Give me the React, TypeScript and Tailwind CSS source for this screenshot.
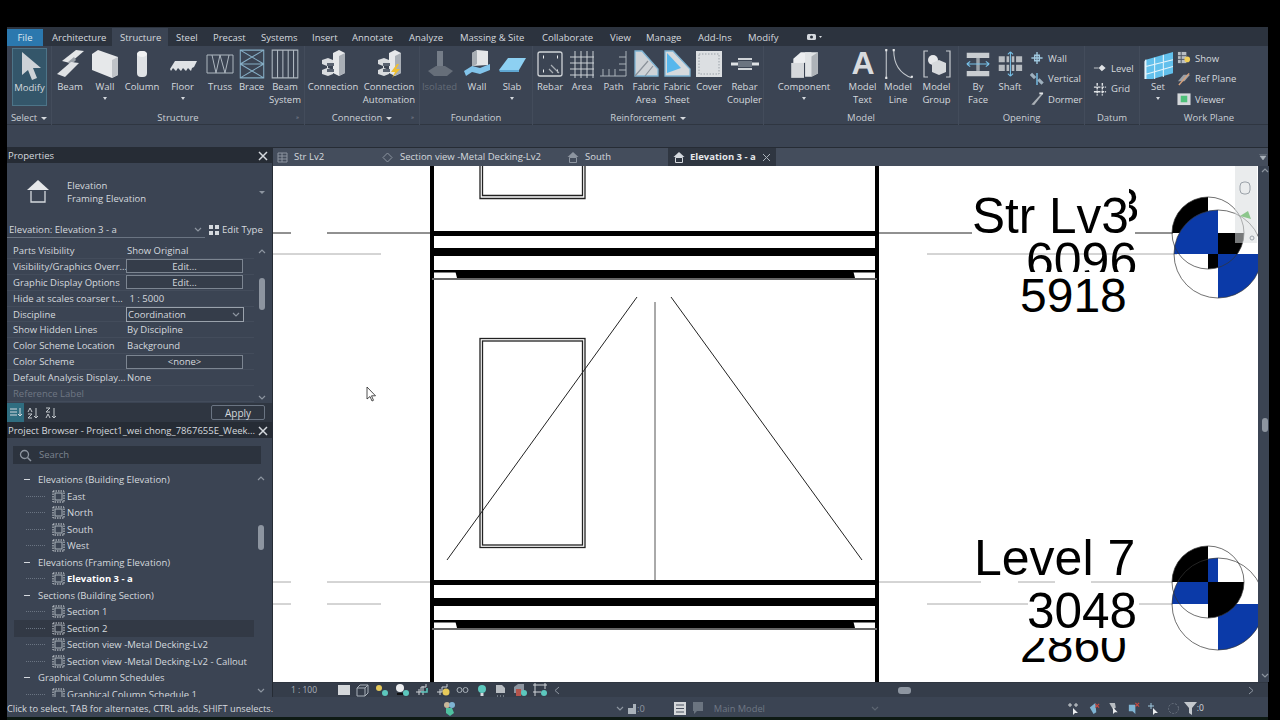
import type { ReactNode } from "react";

const Ic = ({ s = 30, children }: { s?: number; children: ReactNode }) => (
  <svg width={s} height={s} viewBox="0 0 30 30" className="shrink-0">
    {children}
  </svg>
);

const Connection = ({ bolt }: { bolt?: boolean }) => (
  <Ic>
    <path d="M15 4l6-3 6 3v20l-6 3-6-3z" fill="#e6e8ea" />
    <path d="M21 7v20l6-3V4z" fill="#a9afb6" />
    <path d="M4 11l6-2 5 2v4l-5 2v2l5 2v4l-5 2-6-2v-4l5-2v-2l-5-2z" fill="#d9dcdf" />
    <path d="M9 14h7v3H9zM9 20h7v3H9z" fill="#596270" />
    {bolt && <path d="M23 15l-6 8h4l-3 6 8-9h-4l3-5z" fill="#f0c030" />}
  </Ic>
);

const icons: Record<string, ReactNode> = {
  modify: (
    <Ic>
      <path d="M7 2v23l6-5 4 10 5-2-4-10h8z" fill="#cdd2d7" />
    </Ic>
  ),
  beam: (
    <Ic>
      <path d="M7 12L21 1l8 1-14 12z" fill="#e4e6e8" />
      <path d="M13 13l6-5 2 3-6 6z" fill="#9aa1a8" />
      <path d="M2 25l14-12 8 1-14 14z" fill="#dfe2e5" />
    </Ic>
  ),
  wall: (
    <Ic>
      <path d="M2 5l6-4 20 7v18l-6 3-20-8z" fill="#e6e8ea" />
      <path d="M22 11l6-3v18l-6 3z" fill="#bfc3c8" />
    </Ic>
  ),
  column: (
    <Ic>
      <rect x="10" y="2" width="10" height="26" rx="4" fill="#dfe2e5" />
      <ellipse cx="15" cy="5" rx="5" ry="3" fill="#f1f2f3" />
    </Ic>
  ),
  floor: (
    <Ic>
      <path d="M2 20l5-8h22l-3 6-2 1-1 3-3-3-2 3-3-3-2 3-3-3-2 3-3-3-2 3z" fill="#dfe2e5" />
    </Ic>
  ),
  truss: (
    <Ic>
      <path d="M2 6h26v18H2zM7 6l4 18 4-18 5 18 4-18" fill="none" stroke="#aeb7c0" strokeWidth="1" />
    </Ic>
  ),
  brace: (
    <Ic s={32}>
      <path d="M4 2h22v26H4zM4 15h22M4 2l22 13M26 2L4 15M4 15l22 13M26 15L4 28" fill="none" stroke="#86aec6" strokeWidth="1" />
    </Ic>
  ),
  beamSystem: (
    <Ic s={32}>
      <path d="M3 2h24v26H3zM8 2v26M13 2v26M18 2v26M23 2v26" fill="none" stroke="#aeb7c0" strokeWidth="1" />
    </Ic>
  ),
  connection: <Connection />,
  automation: <Connection bolt />,
  isolated: (
    <Ic>
      <path d="M12 2h6v16h-6z" fill="#757d88" />
      <path d="M3 22l8-5h9l8 5-6 5H9z" fill="#666e79" />
    </Ic>
  ),
  wallF: (
    <Ic>
      <path d="M10 4l5-3 11 1v14l-16 1z" fill="#e4e6e8" />
      <path d="M10 4l5-3v14l-5 3z" fill="#a8aeb4" />
      <path d="M2 22l8-5 8 2 10-4v6l-10 4-8-2-6 4z" fill="#82c4ea" />
    </Ic>
  ),
  slab: (
    <Ic>
      <path d="M2 21L11 9h18l-7 12z" fill="#8dd0f2" />
      <path d="M2 21h20v2H3z" fill="#5fa7d2" />
    </Ic>
  ),
  rebar: (
    <Ic>
      <rect x="3" y="3" width="24" height="24" rx="2" fill="none" stroke="#cfd3d7" strokeWidth="1.3" />
      <path d="M8 8h1M22 8h1M8 22h1M22 22h1" stroke="#eceef0" strokeWidth="3" />
      <path d="M16 16l8 8M14 20l4 4" stroke="#a7adb3" strokeWidth="1.2" />
    </Ic>
  ),
  area: (
    <Ic>
      <path d="M3 8h24M3 14h24M3 20h24M3 26h24M8 2v27M14 2v27M20 2v27M26 2v27" stroke="#ccd1d6" strokeWidth="1" />
    </Ic>
  ),
  path: (
    <Ic>
      <path d="M1 27h17M4 20v7M10 20v7M16 20v7M18 27h9V2M20 8h7M20 15h7M20 21h7" fill="none" stroke="#aab2ba" strokeWidth="1" />
    </Ic>
  ),
  fabricArea: (
    <Ic>
      <path d="M4 2h7l16 18v7H4z" fill="#cfd3d7" stroke="#7fb4d3" strokeWidth="1.3" />
      <path d="M4 27L17 12M14 27l8-10" stroke="#8b929a" strokeWidth="1.2" />
    </Ic>
  ),
  fabricSheet: (
    <Ic>
      <path d="M3 2h8l17 18v7H3z" fill="#d6dadd" stroke="#7fb4d3" strokeWidth="1.3" />
      <path d="M5 24V4l14 15z" fill="#57b7ec" />
    </Ic>
  ),
  cover: (
    <Ic>
      <rect x="2" y="2" width="26" height="26" fill="#dcdfe2" />
      <rect x="5" y="5" width="20" height="20" fill="none" stroke="#9aa1a8" strokeDasharray="1.5 1.5" />
    </Ic>
  ),
  coupler: (
    <Ic>
      <path d="M1 15h28" stroke="#dfe2e5" strokeWidth="3" />
      <path d="M8 10h14M8 20h14" stroke="#cfd3d7" strokeWidth="2" />
      <rect x="8" y="12" width="14" height="6" fill="#6b7480" />
    </Ic>
  ),
  component: (
    <Ic s={32}>
      <path d="M5 10l7-6h10v8l-7 2H5z" fill="#eceef0" />
      <path d="M16 4h12v20l-6 3h-6z" fill="#e0e3e5" />
      <path d="M3 14h12v14H3z" fill="#d5d8db" />
      <path d="M22 8l6-4v20l-6 3z" fill="#aeb3b8" />
    </Ic>
  ),
  modelText: (
    <svg width="30" height="30" viewBox="0 0 30 30" className="shrink-0 overflow-hidden">
      <text x="15" y="25" textAnchor="middle" className="font-['Liberation_Sans',sans-serif] text-[32px] font-bold" fill="#d8dbde">
        A
      </text>
    </svg>
  ),
  modelLine: (
    <Ic s={32}>
      <path d="M4 2v26M11 2c0 14 6 22 17 26" fill="none" stroke="#c3c8cd" strokeWidth="1" />
      <path d="M3 2h2M3 28h2M10 2h2M27 27h2" stroke="#e4e6e8" strokeWidth="2" />
    </Ic>
  ),
  modelGroup: (
    <Ic>
      <path d="M6 2H2v26h4M24 2h4v26h-4" fill="none" stroke="#c8ccd1" strokeWidth="1.2" />
      <circle cx="11" cy="11" r="5" fill="#e6e8ea" />
      <path d="M10 14l7-3 7 3v9l-7 3-7-3z" fill="#d6d9dc" />
    </Ic>
  ),
  byFace: (
    <Ic s={26}>
      <path d="M2 2h26v6H2zM2 23h26v6H2z" fill="#c9cdd1" />
      <path d="M13 8h4v15h-4z" fill="#9aa1a8" />
      <path d="M2 15h26M2 15l4-3M2 15l4 3M28 15l-4-3M28 15l-4 3" fill="none" stroke="#78c2ea" strokeWidth="1.2" />
    </Ic>
  ),
  shaft: (
    <Ic s={26}>
      <path d="M2 6h7v7H2zM11 6h3v7h-3zM17 6h3v7h-3zM22 6h7v7h-7zM2 16h7v7H2zM11 16h3v7h-3zM17 16h3v7h-3zM22 16h7v7h-7z" fill="#b6bbc0" />
      <path d="M15.500 1v28M15.500 1l-3 3M15.500 1l3 3M15.500 29l-3-3M15.500 29l3-3" fill="none" stroke="#78c2ea" strokeWidth="1.2" />
    </Ic>
  ),
  set: (
    <Ic s={29}>
      <path d="M2 10L30 2v22L2 32z" fill="#62c0ec" />
      <path d="M2 10v22l-1-1V12zM11 8v22M20 5v23M2 17l28-7M2 25l28-8" fill="none" stroke="#e5f4fb" strokeWidth="1.100" />
    </Ic>
  ),
};

const small: Record<string, ReactNode> = {
  wall: (
    <Ic s={14}>
      <path d="M15 2v26M3 15h24M10 9h10v12H10z" fill="none" stroke="#9fc7de" strokeWidth="3" />
    </Ic>
  ),
  vertical: (
    <Ic s={14}>
      <path d="M2 4l9 9M18 16l9 9" stroke="#9fb0bd" strokeWidth="7" />
      <path d="M15 2v26" stroke="#78c2ea" strokeWidth="3" />
    </Ic>
  ),
  dormer: (
    <Ic s={14}>
      <path d="M3 27L24 4h4L9 28z" fill="#aab0b6" />
      <path d="M20 3h8" stroke="#e2e4e6" strokeWidth="4" />
    </Ic>
  ),
  level: (
    <Ic s={14}>
      <path d="M2 15h10" stroke="#c8ccd1" strokeWidth="2" />
      <path d="M19 8l8 7-8 7-7-7z" fill="#dfe2e5" />
    </Ic>
  ),
  grid: (
    <Ic s={14}>
      <path d="M2 11h26M2 21h26M9 2v27M20 2v27" stroke="#dfe2e5" strokeWidth="3" strokeDasharray="6 2" />
    </Ic>
  ),
  show: (
    <Ic s={14}>
      <path d="M2 2h18v24H2z" fill="#b8bdc2" />
      <path d="M2 10h18M2 18h18M9 2v24" stroke="#4b5361" strokeWidth="2" />
      <circle cx="22" cy="18" r="6" fill="#f0cf5a" />
    </Ic>
  ),
  refPlane: (
    <Ic s={14}>
      <path d="M2 20L14 6h14L16 20z" fill="#9aa1a8" />
      <path d="M4 28L26 3" stroke="#d9a27a" strokeWidth="3" />
    </Ic>
  ),
  viewer: (
    <Ic s={14}>
      <rect x="1" y="3" width="28" height="25" fill="#d5d8db" />
      <rect x="8" y="8" width="14" height="14" fill="#4fc17a" />
    </Ic>
  ),
};

const Caret = () => <div className="mx-auto mt-[4px] h-0 w-0 border-x-[2px] border-t-[3px] border-x-transparent border-t-[#d5d9de]" />;

type Item = { label: string; sub?: string; w: string; icon: string; caret?: boolean; dim?: boolean; on?: boolean };

const RibbonBtn = ({ label, sub, w, icon, caret, dim, on }: Item) => (
  <div className={`flex shrink-0 flex-col items-center text-center leading-[13px] ${w} ${dim ? "text-[#646c78]" : ""} ${on ? "h-[58px] border border-[#4d7488] bg-[#34566a]" : "h-[60px]"}`}>
    <div className="flex h-[32px] items-center justify-center">{icons[icon]}</div>
    <div className="whitespace-nowrap">{label}</div>
    {sub && <div className="whitespace-nowrap">{sub}</div>}
    {caret && <Caret />}
  </div>
);

const SmallBtn = ({ icon, label, className = "" }: { icon: string; label: string; className?: string }) => (
  <div className={`flex h-[20.500px] items-center gap-[4px] whitespace-nowrap ${className}`}>
    {small[icon]}
    <span>{label}</span>
  </div>
);

const Group = ({ w, title, caret, corner, children }: { w: string; title: string; caret?: boolean; corner?: boolean; children: ReactNode }) => (
  <div className={`relative flex shrink-0 flex-col border-r border-[#434c5b] ${w}`}>
    <div className="flex h-[65px] pt-[2px]">{children}</div>
    <div className="flex h-[14px] items-center justify-center gap-[4px] text-[#c9ced3]">
      {title}
      {caret && <span className="h-0 w-0 border-x-[3px] border-t-[3px] border-x-transparent border-t-[#d5d9de]" />}
    </div>
    {corner && <span className="absolute bottom-[5px] right-[5px] text-[6px] leading-none text-[#8d95a0]">»</span>}
  </div>
);

const tabs = [
  { t: "Architecture", w: "w-[68px]" },
  { t: "Structure", w: "w-[56px]", on: true },
  { t: "Steel", w: "w-[37px]" },
  { t: "Precast", w: "w-[48px]" },
  { t: "Systems", w: "w-[51px]" },
  { t: "Insert", w: "w-[40px]" },
  { t: "Annotate", w: "w-[57px]" },
  { t: "Analyze", w: "w-[51px]" },
  { t: "Massing & Site", w: "w-[82px]" },
  { t: "Collaborate", w: "w-[68px]" },
  { t: "View", w: "w-[36px]" },
  { t: "Manage", w: "w-[52px]" },
  { t: "Add-Ins", w: "w-[50px]" },
  { t: "Modify", w: "w-[60px]" },
];

const structure: Item[] = [
  { label: "Beam", w: "w-[36px]", icon: "beam" },
  { label: "Wall", w: "w-[34px]", icon: "wall", caret: true },
  { label: "Column", w: "w-[40px]", icon: "column" },
  { label: "Floor", w: "w-[41px]", icon: "floor", caret: true },
  { label: "Truss", w: "w-[34px]", icon: "truss" },
  { label: "Brace", w: "w-[29px]", icon: "brace" },
  { label: "Beam", sub: "System", w: "w-[38px]", icon: "beamSystem" },
];
const connection: Item[] = [
  { label: "Connection", w: "w-[56px]", icon: "connection" },
  { label: "Connection", sub: "Automation", w: "w-[56px]", icon: "automation" },
];
const foundation: Item[] = [
  { label: "Isolated", w: "w-[39px]", icon: "isolated", dim: true },
  { label: "Wall", w: "w-[36px]", icon: "wallF" },
  { label: "Slab", w: "w-[34px]", icon: "slab", caret: true },
];
const reinforcement: Item[] = [
  { label: "Rebar", w: "w-[34px]", icon: "rebar" },
  { label: "Area", w: "w-[30px]", icon: "area" },
  { label: "Path", w: "w-[33px]", icon: "path" },
  { label: "Fabric", sub: "Area", w: "w-[32px]", icon: "fabricArea" },
  { label: "Fabric", sub: "Sheet", w: "w-[30px]", icon: "fabricSheet" },
  { label: "Cover", w: "w-[34px]", icon: "cover" },
  { label: "Rebar", sub: "Coupler", w: "w-[37px]", icon: "coupler" },
];
const model: Item[] = [
  { label: "Component", w: "w-[80px]", icon: "component", caret: true },
  { label: "Model", sub: "Text", w: "w-[37px]", icon: "modelText" },
  { label: "Model", sub: "Line", w: "w-[34px]", icon: "modelLine" },
  { label: "Model", sub: "Group", w: "w-[43px]", icon: "modelGroup" },
];

const props: { k: string; v?: string; box?: boolean; select?: boolean; dim?: boolean }[] = [
  { k: "Parts Visibility", v: "Show Original" },
  { k: "Visibility/Graphics Overr...", v: "Edit...", box: true },
  { k: "Graphic Display Options", v: "Edit...", box: true },
  { k: "Hide at scales coarser t...", v: " 1 : 5000" },
  { k: "Discipline", v: "Coordination", select: true },
  { k: "Show Hidden Lines", v: "By Discipline" },
  { k: "Color Scheme Location", v: "Background" },
  { k: "Color Scheme", v: "<none>", box: true },
  { k: "Default Analysis Display...", v: "None" },
  { k: "Reference Label", dim: true },
];

const tree: { t: string; head?: boolean; bold?: boolean; hl?: boolean }[] = [
  { t: "Elevations (Building Elevation)", head: true },
  { t: "East" },
  { t: "North" },
  { t: "South" },
  { t: "West" },
  { t: "Elevations (Framing Elevation)", head: true },
  { t: "Elevation 3 - a", bold: true },
  { t: "Sections (Building Section)", head: true },
  { t: "Section 1" },
  { t: "Section 2", hl: true },
  { t: "Section view -Metal Decking-Lv2" },
  { t: "Section view -Metal Decking-Lv2 - Callout" },
  { t: "Graphical Column Schedules", head: true },
  { t: "Graphical Column Schedule 1" },
];

const Close = () => (
  <svg width="10" height="10" viewBox="0 0 10 10" className="shrink-0">
    <path d="M1 1l8 8M9 1L1 9" stroke="#d5d9de" strokeWidth="1.500" />
  </svg>
);

const Chevron = ({ up, color = "#8d95a0" }: { up?: boolean; color?: string }) => (
  <svg width="8" height="5" viewBox="0 0 8 5" className="shrink-0">
    <path d={up ? "M1 4l3-3 3 3" : "M1 1l3 3 3-3"} fill="none" stroke={color} strokeWidth="1.200" />
  </svg>
);

const HouseIcon = ({ color = "#d5d9de" }: { color?: string }) => (
  <svg width="12" height="12" viewBox="0 0 12 12" className="shrink-0">
    <path d="M6 1L.5 6h11z" fill={color} />
    <path d="M2.500 6.500h7v5h-7z" fill="none" stroke={color} />
  </svg>
);

const ViewIcon = () => (
  <svg width="13" height="13" viewBox="0 0 13 13" className="shrink-0">
    <rect x="3" y="3" width="7" height="7" fill="none" stroke="#aab2ba" />
    <rect x="1" y="1" width="11" height="11" fill="none" stroke="#d5d9de" strokeWidth="1" strokeDasharray="1.500 1" />
  </svg>
);

const Bulb = ({ c = "#5cc7bd" }: { c?: string }) => (
  <svg width="14" height="14" viewBox="0 0 14 14" className="shrink-0">
    <circle cx="7" cy="6" r="4" fill={c} />
    <rect x="5.500" y="10" width="3" height="3" fill="#d5d9de" />
  </svg>
);

const viewBarIcons = [
  <span key="a" className="h-[10px] w-[12px] bg-[#d5d8db]" />,
  <svg key="b" width="13" height="13" viewBox="0 0 13 13"><path d="M1 4l3-3h8v8l-3 3H1zM1 4h8v8M9 4l3-3" fill="none" stroke="#aab2ba" /></svg>,
  <svg key="c" width="15" height="14" viewBox="0 0 15 14"><circle cx="5" cy="5" r="3" fill="#e6c95a" /><circle cx="11" cy="10" r="3" fill="#5cc7bd" /></svg>,
  <svg key="d" width="15" height="14" viewBox="0 0 15 14"><circle cx="5" cy="5" r="4" fill="#eceef0" /><path d="M2 11h6" stroke="#111" strokeWidth="2" /><circle cx="11" cy="10" r="3" fill="#5cc7bd" /></svg>,
  <svg key="e" width="15" height="14" viewBox="0 0 15 14"><path d="M1 9h5V4h5V1M4 12V6M8 12V3" fill="none" stroke="#cfd3d7" /><path d="M6 9h6V5" fill="none" stroke="#5cc7bd" strokeWidth="1.500" /></svg>,
  <svg key="f" width="15" height="14" viewBox="0 0 15 14"><path d="M1 9h5V4h5V1M4 12V6" fill="none" stroke="#cfd3d7" /><circle cx="10" cy="9" r="3.500" fill="#e6c95a" /></svg>,
  <svg key="g" width="13" height="10" viewBox="0 0 13 10"><circle cx="3.500" cy="5" r="2.500" fill="none" stroke="#aab2ba" /><circle cx="9.500" cy="5" r="2.500" fill="none" stroke="#aab2ba" /></svg>,
  <Bulb key="h" />,
  <svg key="i" width="13" height="13" viewBox="0 0 13 13"><path d="M2 1h6l3 3v5H2z" fill="#b8bdc2" /><path d="M3 12h1M6 12h1M9 12h1" stroke="#aab2ba" /></svg>,
  <svg key="j" width="15" height="14" viewBox="0 0 15 14"><path d="M1 4l4-3h6v9H1z" fill="#8d95a0" /><rect x="3" y="6" width="5" height="7" fill="#b4544c" /><circle cx="11" cy="10" r="3" fill="#5cc7bd" /></svg>,
  <svg key="k" width="15" height="14" viewBox="0 0 15 14"><path d="M2 0v13M12 0v6M0 2h14M0 9h8" fill="none" stroke="#cfd3d7" /><circle cx="11" cy="10" r="3" fill="#5cc7bd" /></svg>,
];

const selectIcons = [
  <svg key="a" width="13" height="13" viewBox="0 0 13 13"><path d="M1 3h4M7 3h4M3 1v4M9 1v4" stroke="#cfd3d7" /><path d="M6 6v7l2-2h3z" fill="#eceef0" /></svg>,
  <svg key="b" width="13" height="13" viewBox="0 0 14 14"><path d="M9 1L3 6l4 7 3-2z" fill="#7fb4d3" /><path d="M9 2l4 4M13 2L9 6" stroke="#c9493f" strokeWidth="1.300" /></svg>,
  <svg key="c" width="13" height="13" viewBox="0 0 13 14"><path d="M2 1h6l1 5-3 2z" fill="#b8bdc2" /><path d="M6 6v7l2-2h3z" fill="#eceef0" /></svg>,
  <svg key="d" width="13" height="13" viewBox="0 0 14 14"><path d="M2 3h7v10l-3-3H2z" fill="#7fb4d3" /><path d="M9 1l4 4M13 1L9 5" stroke="#c9493f" strokeWidth="1.300" /></svg>,
  <svg key="e" width="13" height="13" viewBox="0 0 13 13"><path d="M4 1v6M1 4h6" stroke="#9fc7de" /><path d="M6 6v7l2-2h3z" fill="#eceef0" /></svg>,
  <svg key="f" width="13" height="13" viewBox="0 0 13 13"><circle cx="6.500" cy="6.500" r="5" fill="none" stroke="#6b7480" strokeDasharray="2 1.500" /></svg>,
];

const Drawing = () => (
  <svg viewBox="273 166 985 516" className="block h-[516px] w-[985px] shrink-0 bg-white">
    <defs>
      <clipPath id="clipTop"><rect x="1000" y="240" width="160" height="32" /></clipPath>
      <clipPath id="clipLow"><rect x="1000" y="638" width="160" height="30" /></clipPath>
      <clipPath id="clipStray"><rect x="1129" y="186" width="8" height="38" /></clipPath>
    </defs>

    {/* level lines */}
    <path d="M273 233h18M327 233h105M877 233h95M1135 233h38" stroke="#222" strokeWidth="1" />
    <path d="M273 254h108M927 254h250" stroke="#aaa" strokeWidth="1" />
    <path d="M273 582h18M327 582h105M877 582h104M1018 582h37M1091 582h82" stroke="#aaa" strokeWidth="1" />
    <path d="M273 604h18M327 604h54M927 604h101M1139 604h34" stroke="#aaa" strokeWidth="1" />

    {/* upper window */}
    <path d="M480 166v32.500h105V166M482.500 166v29.500h100V166" fill="none" stroke="#222" strokeWidth="1.300" />
    {/* walls */}
    <path d="M432 166v516M877 166v516" stroke="#000" strokeWidth="4" />

    {/* upper beam band */}
    <rect x="432" y="231" width="445" height="5" />
    <rect x="432" y="248" width="445" height="8" />
    <rect x="432" y="270" width="445" height="2.500" />
    <path d="M455 270h398l2 8H457z" />
    <path d="M432 279h445" stroke="#666" strokeWidth="2" />
    {/* lower beam band */}
    <rect x="432" y="580" width="445" height="5" />
    <rect x="432" y="598" width="445" height="8" />
    <rect x="432" y="620" width="445" height="2.500" />
    <path d="M455 620h398l2 8H457z" />
    <path d="M432 629h445" stroke="#666" strokeWidth="2" />

    {/* window and door swing */}
    <rect x="480" y="338.500" width="105" height="209" fill="none" stroke="#222" strokeWidth="1.300" />
    <rect x="482.500" y="341" width="100" height="204" fill="none" stroke="#222" strokeWidth="1.300" />
    <path d="M447 560L637 297M671 297l191 263" stroke="#222" strokeWidth="1" fill="none" />
    <path d="M655 302v278" stroke="#555" strokeWidth="1" />

    {/* level text */}
    <g className="font-['Liberation_Sans',sans-serif]" fill="#000">
      <text x="1112" y="222" fontSize="49" clipPath="url(#clipStray)">3</text>
      <text x="972" y="233" fontSize="49.500">Str Lv3</text>
      <text x="1026" y="278" fontSize="50" clipPath="url(#clipTop)">6096</text>
      <text x="1020" y="312" fontSize="48">5918</text>
      <text x="974" y="575" fontSize="50">Level 7</text>
      <text x="1027" y="628" fontSize="49.500">3048</text>
      <text x="1020" y="662" fontSize="48" clipPath="url(#clipLow)">2860</text>
    </g>

    {/* Str Lv3 marker */}
    <path d="M1208 233v-36a36 36 0 0 0-36 36zM1208 233h36a36 36 0 0 1-36 36z" fill="#000" />
    <path d="M1218 254v-44a44 44 0 0 0-44 44zM1218 254h44a44 44 0 0 1-44 44z" fill="#0b3aa8" />
    <circle cx="1208" cy="233" r="36" fill="none" stroke="#333" strokeWidth="0.700" />
    <circle cx="1218" cy="254" r="44" fill="none" stroke="#333" strokeWidth="0.700" />

    {/* Level 7 marker */}
    <path d="M1218 604v-46a46 46 0 0 0-46 46zM1218 604h46a46 46 0 0 1-46 46z" fill="#0b3aa8" />
    <path d="M1208 582v-36a36 36 0 0 0-36 36zM1208 582h36a36 36 0 0 1-36 36z" fill="#000" />
    <circle cx="1208" cy="582" r="36" fill="none" stroke="#333" strokeWidth="0.700" />
    <circle cx="1218" cy="604" r="46" fill="none" stroke="#333" strokeWidth="0.700" />

    {/* navigation bar */}
    <rect x="1235" y="166" width="22" height="77" fill="#d9dcdf" fillOpacity="0.55" />
    <rect x="1240" y="182" width="10" height="12" rx="4" fill="none" stroke="#9aa1a8" />
    <path d="M1240 216l8-5 3 8z" fill="#8cc68c" />
    <circle cx="1252" cy="238" r="2" fill="none" stroke="#9aa1a8" />

    {/* mouse pointer */}
    <path d="M367 387v12l3-2.500 2 4.500 1.500-.7-2-4.500h4z" fill="#fff" stroke="#222" strokeWidth="0.800" />
  </svg>
);

export default function App() {
  return (
    <div className="flex h-[720px] w-[1280px] flex-col overflow-hidden bg-black pl-[7px] pr-[12px] pt-[27px] font-['Open_Sans',sans-serif] text-[9.500px] leading-none text-[#d5d9de]">
      {/* ribbon tabs */}
      <div className="flex h-[19px] shrink-0 items-end bg-[#2c333e]">
        <div className="flex h-[17px] w-[36px] items-center justify-center bg-[#2b78ae] text-[#dbe7f0]">File</div>
        <div className="w-px" />
        {tabs.map((t) => (
          <div key={t.t} className={`flex h-[18px] items-center pl-[8px] pt-[1px] ${t.w} ${t.on ? "bg-[#3b4453]" : ""}`}>
            {t.t}
          </div>
        ))}
        <svg width="16" height="8" viewBox="0 0 16 8" className="mb-[5px] ml-[7px]">
          <rect x="0" y="1" width="9" height="6" rx="1.500" fill="#d5d9de" />
          <circle cx="4.500" cy="4" r="1.500" fill="#2c333e" />
          <path d="M12 3h3l-1.500 2z" fill="#d5d9de" />
        </svg>
      </div>

      {/* ribbon */}
      <div className="flex h-[79px] shrink-0 items-start border-b border-[#2f3641] bg-[#3b4453]">
        <Group w="w-[45px]" title="Select" caret>
          <div className="pl-[5px]">
            <RibbonBtn label="Modify" w="w-[35px]" icon="modify" on />
          </div>
        </Group>
        <Group w="w-[253px]" title="Structure" corner>
          {structure.map((i) => <RibbonBtn key={i.label + i.icon} {...i} />)}
        </Group>
        <Group w="w-[115px]" title="Connection" caret corner>
          {connection.map((i) => <RibbonBtn key={i.icon} {...i} />)}
        </Group>
        <Group w="w-[113px]" title="Foundation">
          {foundation.map((i) => <RibbonBtn key={i.icon} {...i} />)}
        </Group>
        <Group w="w-[231px]" title="Reinforcement" caret>
          {reinforcement.map((i) => <RibbonBtn key={i.icon} {...i} />)}
        </Group>
        <Group w="w-[195px]" title="Model">
          {model.map((i) => <RibbonBtn key={i.icon} {...i} />)}
        </Group>
        <Group w="w-[126px]" title="Opening">
          <RibbonBtn label="By" sub="Face" w="w-[38px]" icon="byFace" />
          <RibbonBtn label="Shaft" w="w-[26px]" icon="shaft" />
          <div className="ml-[7px] flex flex-col">
            <SmallBtn icon="wall" label="Wall" />
            <SmallBtn icon="vertical" label="Vertical" />
            <SmallBtn icon="dormer" label="Dormer" />
          </div>
        </Group>
        <Group w="w-[55px]" title="Datum">
          <div className="ml-[8px] mt-[10px] flex flex-col">
            <SmallBtn icon="level" label="Level" />
            <SmallBtn icon="grid" label="Grid" />
          </div>
        </Group>
        <div className="flex flex-col">
          <div className="flex h-[65px] pt-[2px]">
            <RibbonBtn label="Set" w="w-[36px]" icon="set" caret />
            <div className="ml-[1px] flex flex-col">
              <SmallBtn icon="show" label="Show" />
              <SmallBtn icon="refPlane" label="Ref  Plane" />
              <SmallBtn icon="viewer" label="Viewer" />
            </div>
          </div>
          <div className="flex h-[14px] w-[128px] items-center justify-center pl-[10px] text-[#c9ced3]">Work Plane</div>
        </div>
      </div>

      {/* options bar */}
      <div className="h-[22px] shrink-0 bg-[#3b4453]" />

      <div className="flex h-[550px] shrink-0 gap-px bg-[#262c35] pt-px">
        {/* left panels */}
        <div className="flex w-[265px] shrink-0 flex-col gap-px">
          <div className="flex h-[274px] shrink-0 flex-col bg-[#3b4453]">
            <div className="flex h-[15px] shrink-0 items-center justify-between bg-[#262c35] pl-px pr-[4px]">
              <span>Properties</span>
              <Close />
            </div>
            <div className="flex h-[59px] shrink-0 items-center pr-[7px]">
              <div className="flex w-[60px] justify-center pb-[4px] pl-[2px]">
                <svg width="24" height="24" viewBox="0 0 24 24">
                  <path d="M12 1L1 11h22z" fill="#e6e8ea" />
                  <path d="M5 12v11h14V12" fill="none" stroke="#d5d9de" strokeWidth="1.300" />
                </svg>
              </div>
              <div className="flex flex-1 flex-col gap-[2px] pb-[1px] leading-[11px]">
                <span>Elevation</span>
                <span>Framing Elevation</span>
              </div>
              <span className="h-0 w-0 border-x-[3px] border-t-[3px] border-x-transparent border-t-[#8d95a0]" />
            </div>
            <div className="flex h-[16px] shrink-0 items-center">
              <div className="flex h-[16px] w-[198px] items-center justify-between border-b border-[#6a7482] pl-[2px] pr-[3px] text-[9.600px]">
                <span>Elevation: Elevation 3 - a</span>
                <Chevron />
              </div>
              <svg width="10" height="10" viewBox="0 0 10 10" className="ml-[4px]">
                <path d="M0 0h4v4H0zM6 0h4v4H6zM0 6h4v4H0zM6 6h4v4H6z" fill="#d5d9de" />
              </svg>
              <span className="ml-[3px] text-[9.600px]">Edit Type</span>
            </div>
            <div className="flex min-h-0 flex-1 pt-[5px]">
              <div className="flex w-[247px] shrink-0 flex-col">
                {props.map((p) => (
                  <div key={p.k} className="flex h-[15.900px] shrink-0 items-center border-b border-[#434c5b] leading-[13px]">
                    <div className={`w-[119px] shrink-0 whitespace-nowrap pl-[6px] ${p.dim ? "text-[#6f7783]" : ""}`}>{p.k}</div>
                    {p.box && (
                      <div className="flex h-[14px] w-[117px] items-center justify-center border border-[#7c8591] bg-[#353d4a]">{p.v}</div>
                    )}
                    {p.select && (
                      <div className="flex h-[15px] w-[118px] items-center justify-between border border-[#9aa2ac] bg-[#353d4a] pl-[1px] pr-[3px]">
                        {p.v}
                        <Chevron />
                      </div>
                    )}
                    {!p.box && !p.select && <div className="whitespace-pre pl-px">{p.v}</div>}
                  </div>
                ))}
              </div>
              <div className="flex flex-1 flex-col items-center pr-[3px] pt-[6px]">
                <Chevron up />
                <div className="mt-[24px] h-[32px] w-[6px] rounded-[3px] bg-[#8d95a0]" />
                <div className="flex-1" />
                <div className="pb-[3px]">
                  <Chevron />
                </div>
              </div>
            </div>
            <div className="flex h-[19px] shrink-0 items-center bg-[#2f3641] pr-[7px]">
              <div className="flex h-[19px] w-[17px] items-center justify-center bg-[#2f6d80]">
                <svg width="12" height="11" viewBox="0 0 12 11">
                  <path d="M0 2h7M0 5h7M0 8h7M10 1v8M8 7l2 2 2-2" fill="none" stroke="#d5d9de" />
                </svg>
              </div>
              <svg width="12" height="12" viewBox="0 0 12 12" className="ml-[3px]">
                <path d="M1 5l2-4 2 4M1 7h4L1 11h4M9 1v10M7 9l2 2 2-2" fill="none" stroke="#c3c8cd" />
              </svg>
              <svg width="12" height="12" viewBox="0 0 12 12" className="ml-[6px]">
                <path d="M1 1h4L1 5h4M1 11l2-4 2 4M9 1v10M7 9l2 2 2-2" fill="none" stroke="#c3c8cd" />
              </svg>
              <div className="ml-auto flex h-[15px] w-[54px] items-center justify-center rounded-[2px] border border-[#6a7482] text-[10px]">Apply</div>
            </div>
          </div>

          <div className="flex min-h-0 flex-1 flex-col bg-[#3b4453]">
            <div className="flex h-[15px] shrink-0 items-center justify-between bg-[#262c35] pl-px pr-[4px]">
              <span className="whitespace-nowrap">Project Browser - Project1_wei chong_7867655E_Week...</span>
              <Close />
            </div>
            <div className="flex h-[32px] shrink-0 items-center pl-[6px] pr-[11px] pt-[2px]">
              <div className="flex h-[18px] w-full items-center gap-[7px] bg-[#2c333e] pl-[6px] text-[#7c8591]">
                <svg width="13" height="13" viewBox="0 0 13 13">
                  <circle cx="5.500" cy="5.500" r="4" fill="none" stroke="#8d95a0" strokeWidth="1.300" />
                  <path d="M8.500 8.500L12 12" stroke="#8d95a0" strokeWidth="1.500" />
                </svg>
                Search
              </div>
            </div>
            <div className="flex min-h-0 flex-1">
              <div className="w-[247px] shrink-0 overflow-hidden pl-[7px] pt-[1.500px]">
                {tree.map((n) => (
                  <div key={n.t} className={`flex h-[16.500px] items-center whitespace-nowrap leading-[13px] ${n.hl ? "bg-[#323945]" : ""} ${n.bold ? "font-bold text-white" : ""}`}>
                    {n.head ? (
                      <>
                        <span className="ml-[10px] mr-[8px] h-px w-[6px] bg-[#d5d9de]" />
                        <span>{n.t}</span>
                      </>
                    ) : (
                      <>
                        <span className="ml-[12px] mr-[7px] w-[19px] border-t border-dotted border-[#6a7482]" />
                        <ViewIcon />
                        <span className="ml-[2px]">{n.t}</span>
                      </>
                    )}
                  </div>
                ))}
              </div>
              <div className="flex flex-1 flex-col items-center pr-[4px] pt-[6px]">
                <Chevron up />
                <div className="mt-[44px] h-[25px] w-[6px] rounded-[3px] bg-[#8d95a0]" />
                <div className="flex-1" />
                <div className="pb-[4px]">
                  <Chevron />
                </div>
              </div>
            </div>
          </div>
        </div>

        {/* view area */}
        <div className="flex w-[995px] shrink-0 flex-col">
          <div className="flex h-[18px] shrink-0 items-center bg-[#444d5c]">
            <div className="flex w-[109px] items-center gap-[6px] pl-[4px]">
              <svg width="11" height="11" viewBox="0 0 11 11"><path d="M1 1h9v9H1zM1 4h9M1 7h9M5 1v9" fill="none" stroke="#8d95a0" /></svg>
              Str Lv2
            </div>
            <div className="flex w-[185px] items-center gap-[7px] whitespace-nowrap">
              <svg width="11" height="11" viewBox="0 0 11 11"><path d="M5.500 1l4.500 4.500L5.500 10 1 5.500z" fill="none" stroke="#8d95a0" /></svg>
              Section view -Metal Decking-Lv2
            </div>
            <div className="flex w-[101px] items-center gap-[6px]">
              <HouseIcon color="#8d95a0" />
              South
            </div>
            <div className="flex h-[18px] w-[108px] items-center gap-[5px] bg-[#2f3641] pl-[5px] font-bold text-[#e6e8ea]">
              <HouseIcon />
              <span className="whitespace-nowrap">Elevation 3 - a</span>
              <svg width="9" height="9" viewBox="0 0 9 9" className="ml-[1px]"><path d="M1 1l7 7M8 1L1 8" stroke="#aab2ba" /></svg>
            </div>
            <svg width="8" height="7" viewBox="0 0 8 7" className="ml-auto mr-[1px]"><path d="M0 0h8M1 2h6l-3 4z" fill="#aab2ba" stroke="#aab2ba" strokeWidth="0.500" /></svg>
          </div>
          <div className="flex h-[516px] shrink-0">
            <Drawing />
            <div className="flex flex-1 flex-col items-center bg-[#3b4453] pb-[4px] pl-[3px] pt-[2px]">
              <Chevron up />
              <div className="mt-[245px] h-[14px] w-[6px] rounded-[3px] bg-[#8d95a0]" />
              <div className="flex-1" />
              <Chevron />
            </div>
          </div>
          <div className="flex h-[15px] shrink-0 items-center border-t border-[#2f3641] bg-[#353d4a] pl-[18px]">
            <span className="w-[47px] text-[8.500px] text-[#aab2ba]">1 : 100</span>
            <div className="flex items-center gap-[5.500px]">{viewBarIcons}</div>
            <svg width="6" height="9" viewBox="0 0 6 9" className="ml-[6px]"><path d="M5 1L1 4.500 5 8" fill="none" stroke="#8d95a0" /></svg>
            <div className="ml-[338px] h-[7px] w-[13px] rounded-[3px] bg-[#8d95a0]" />
            <svg width="6" height="9" viewBox="0 0 6 9" className="ml-[337px]"><path d="M1 1l4 3.500L1 8" fill="none" stroke="#8d95a0" /></svg>
          </div>
        </div>
      </div>

      {/* status bar */}
      <div className="flex h-[20px] shrink-0 items-center bg-[#3b4453] pt-[3px] text-[9.300px]">
        <span className="w-[436px] shrink-0 whitespace-nowrap">Click to select, TAB for alternates, CTRL adds, SHIFT unselects.</span>
        <svg width="13" height="15" viewBox="0 0 13 15">
          <circle cx="4" cy="4" r="3" fill="#c9b79a" />
          <circle cx="9" cy="4" r="3" fill="#7fb4d3" />
          <path d="M3 7h6l2 5-4 3-4-3z" fill="#4fc1a0" />
        </svg>
        <span className="ml-[160px]"><Chevron /></span>
        <svg width="10" height="12" viewBox="0 0 10 12" className="ml-[3px]"><path d="M1 11V5h5V1h3v10z" fill="#aab2ba" /></svg>
        <span className="text-[#8d95a0]">:0</span>
        <svg width="12" height="13" viewBox="0 0 12 13" className="ml-[29px]"><path d="M0 0h12v13H0z" fill="#d5d8db" /><path d="M2 3h8M2 6.500h8M2 10h8" stroke="#4b5361" /></svg>
        <svg width="12" height="13" viewBox="0 0 12 13" className="ml-[6px]"><path d="M1 0h10v9H5l-3 3V9H1z" fill="#6b7480" /></svg>
        <span className="ml-[10px] w-[157px] text-[#6f7783]">Main Model</span>
        <Chevron color="#5d6672" />
        <div className="ml-[188px] flex items-center gap-[7px]">{selectIcons}</div>
        <svg width="13" height="13" viewBox="0 0 13 13" className="ml-[4px]"><path d="M0 0h13L8 6v7L5 11V6z" fill="#c3c8cd" /></svg>
        <span className="text-[8.500px]">:0</span>
      </div>
      <div className="h-[3px] shrink-0 bg-[#0e1a14]" />
    </div>
  );
}
